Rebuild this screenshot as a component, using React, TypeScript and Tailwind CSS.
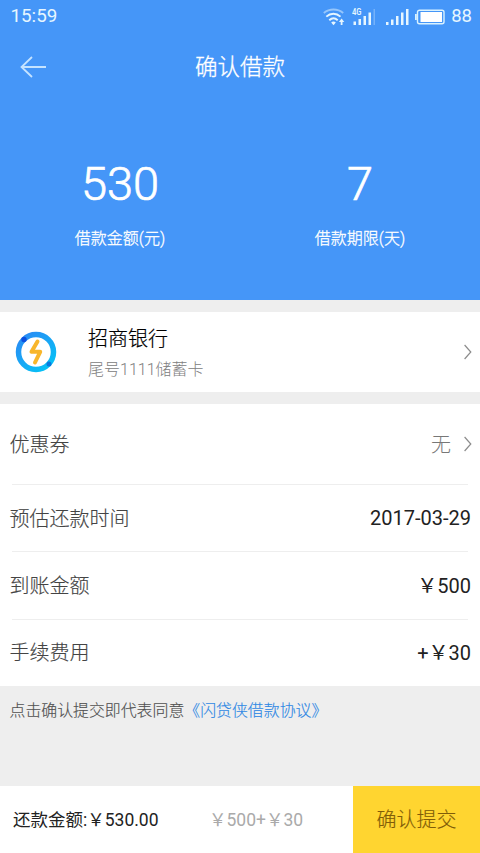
import type { ReactNode } from 'react';

interface DetailRowProps {
  label: string;
  children: ReactNode;
  className: string;
}

const YEN = '\uffe5';

const details = [
  { label: '预估还款时间', value: '2017-03-29' },
  { label: '到账金额', value: `${YEN}500` },
  { label: '手续费用', value: `+${YEN}30` },
];

function WifiIcon() {
  return (
    <svg width="22" height="18" viewBox="0 0 22 18" fill="none" stroke="#e6f6ff" strokeWidth="1.900">
      <path d="M.8 5C6.500.4 14.500.4 20.200 5" opacity=".5" />
      <path d="M3.300 8.600c4.200-3.800 10-3.800 14.200 0" />
      <path d="M6.300 12.200c2.600-2.400 5.800-2.400 8.400 0" />
      <path d="M8.200 14.600c1.400-1.400 3.200-1.400 4.600 0l-2.300 2.600z" fill="#e6f6ff" stroke="none" />
      <path d="M18.600 17v-4" strokeWidth="1.800" />
      <path d="M15.900 14l2.700-3.500 2.700 3.500z" fill="#e6f6ff" stroke="none" />
    </svg>
  );
}

function MobileSignal() {
  return (
    <svg width="24" height="18" viewBox="0 0 24 18" fill="#e6f6ff">
      <text x="0" y="7" fontSize="8.500" fontWeight="600" fontFamily="Roboto, sans-serif" textLength="9.500" lengthAdjust="spacingAndGlyphs">4G</text>
      <rect x="1.500" y="13.500" width="2.500" height="3.500" />
      <rect x="6.500" y="11" width="2.500" height="6" />
      <rect x="11.500" y="8" width="2.500" height="9" />
      <rect x="16.500" y="4.500" width="2.500" height="12.500" />
      <rect x="21.500" y="1" width="1.500" height="16" opacity=".3" />
    </svg>
  );
}

function SignalBars() {
  return (
    <svg width="23" height="18" viewBox="0 0 23 18" fill="#e6f6ff">
      <rect x="0" y="14" width="2.500" height="3" />
      <rect x="5" y="11.500" width="2.500" height="5.500" />
      <rect x="10" y="8" width="2.500" height="9" />
      <rect x="15" y="4.500" width="2.500" height="12.500" />
      <rect x="20" y="1" width="2.500" height="16" />
    </svg>
  );
}

function BatteryIcon() {
  return (
    <svg width="30" height="16" viewBox="0 0 30 16" fill="none">
      <rect x="2.500" y="1.200" width="26.500" height="13.600" rx="2" stroke="#d9f2ff" strokeWidth="1.400" />
      <rect x="5.500" y="3" width="21.500" height="10" fill="#fff" />
      <rect x="0" y="5" width="1.800" height="6" fill="#d9f2ff" />
    </svg>
  );
}

function ChevronIcon() {
  return (
    <svg width="8" height="16" viewBox="0 0 8 16" fill="none" stroke="#8c8c8c" strokeWidth="1.200">
      <path d="M.6 1l6.200 7-6.200 7" />
    </svg>
  );
}

function BankLogo() {
  return (
    <svg width="42" height="42" viewBox="0 0 42 42" fill="none">
      <defs>
        <linearGradient id="ring" x1="8" y1="4" x2="34" y2="38" gradientUnits="userSpaceOnUse">
          <stop offset="0" stopColor="#2a8cf4" />
          <stop offset="1" stopColor="#05c3f6" />
        </linearGradient>
      </defs>
      <circle cx="21" cy="21" r="17.500" stroke="url(#ring)" strokeWidth="5.500" />
      <circle cx="9" cy="8.500" r="2.700" fill="#0b4fe0" />
      <circle cx="34" cy="33" r="2.500" fill="#0878dd" />
      <path d="M22.500 10.500L16.500 20.800h8.700L20 31.500" stroke="#f8b62b" strokeWidth="4" strokeLinecap="round" strokeLinejoin="round" />
    </svg>
  );
}

function DetailRow({ label, children, className }: DetailRowProps) {
  return (
    <div className={`flex items-center justify-between pr-[9px] pl-[9.5px] ${className}`}>
      <span className="pt-px font-light text-[#444444] [-webkit-text-stroke:0.15px]">{label}</span>
      {children}
    </div>
  );
}

export default function App() {
  return (
    <div className="flex h-[853px] w-[480px] flex-col overflow-hidden bg-[#eeeeee] font-[Roboto,'Noto_Sans_CJK_SC',sans-serif] text-[20px] leading-none font-normal text-[#222222]">
      <header className="h-[300px] shrink-0 bg-[#4596f8] text-white">
        <div className="flex h-[33px] items-center pr-2 pl-[10.5px] text-[#e6f6ff]">
          <span className="mr-auto text-[18.8px]">15:59</span>
          <WifiIcon />
          <span className="ml-[7px]"><MobileSignal /></span>
          <span className="ml-[10px]"><SignalBars /></span>
          <span className="ml-[6px]"><BatteryIcon /></span>
          <span className="ml-[6px] text-[18.5px]">88</span>
        </div>

        <div className="grid h-[68px] grid-cols-[90px_1fr_90px] items-center">
          <button className="pl-[20px]">
            <svg width="28" height="22" viewBox="0 0 28 22" fill="none" stroke="#c5e3ff" strokeWidth="1.800">
              <path d="M12 1L1.500 11 12 21M1.500 11H26" />
            </svg>
          </button>
          <h1 className="pt-px text-center text-[22.5px] font-light [-webkit-text-stroke:0.3px]">确认借款</h1>
        </div>

        <div className="grid grid-cols-2 pt-[59px] text-center">
          <div>
            <div className="text-[47px] font-light [-webkit-text-stroke:0.7px]">530</div>
            <div className="mt-[24px] text-[16px] font-light [-webkit-text-stroke:0.3px]">借款金额(元)</div>
          </div>
          <div>
            <div className="text-[47px] font-light [-webkit-text-stroke:0.7px]">7</div>
            <div className="mt-[24px] text-[16px] font-light [-webkit-text-stroke:0.3px]">借款期限(天)</div>
          </div>
        </div>
      </header>

      <section className="mt-3 flex h-20 shrink-0 items-center bg-white pr-2 pl-[15px]">
        <BankLogo />
        <div className="ml-[31px] flex-1 pt-[2px] font-light">
          <div className="text-black [-webkit-text-stroke:0.2px]">招商银行</div>
          <div className="mt-[13px] text-[16px] text-[#808080]">尾号1111储蓄卡</div>
        </div>
        <ChevronIcon />
      </section>

      <section className="mt-3 shrink-0 bg-white">
        <DetailRow label="优惠券" className="h-20">
          <span className="-mr-px flex items-center gap-[13px] font-light text-[#777777]">
            <span className="pt-px">无</span>
            <ChevronIcon />
          </span>
        </DetailRow>
        {details.map((item) => (
          <div key={item.label}>
            <div className="mr-3 ml-3 h-px bg-[#eeeeee]" />
            <DetailRow label={item.label} className="h-[66.4px]">
              <span>{item.value}</span>
            </DetailRow>
          </div>
        ))}
      </section>

      <p className="mt-[17px] pl-[9.5px] text-[15.9px] font-light text-[#505050] [-webkit-text-stroke:0.15px]">
        点击确认提交即代表同意<a className="text-[#2f88e4]">《闪贷侠借款协议》</a>
      </p>

      <footer className="mt-auto flex h-[67px] shrink-0 items-center bg-white">
        <span className="w-[198px] pt-[2px] pl-[13px] text-[17.5px]">还款金额:{YEN}530.00</span>
        <span className="pt-[2px] pl-[11px] text-[17.5px] text-[#aaaaaa]">{YEN}500+{YEN}30</span>
        <button className="ml-auto h-full w-[127px] bg-[#ffd530] pt-px text-[20px] font-light text-[#805c08] [-webkit-text-stroke:0.15px]">确认提交</button>
      </footer>
    </div>
  );
}
